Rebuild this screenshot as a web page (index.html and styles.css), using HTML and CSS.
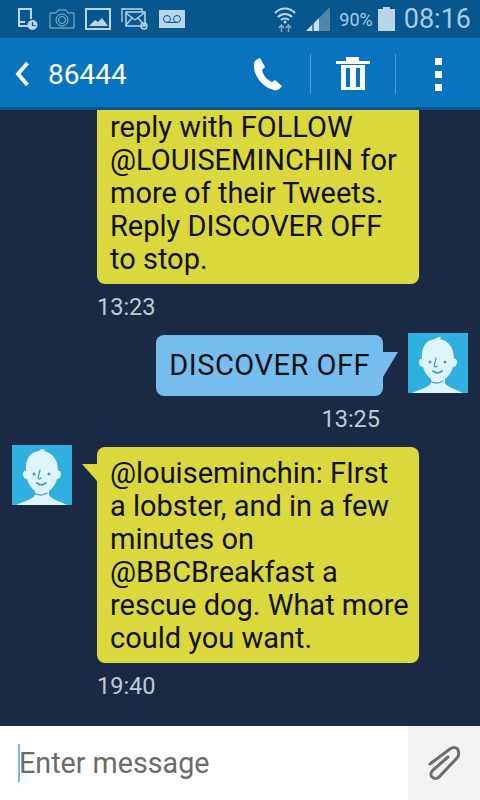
FILE: index.html
```html
<!DOCTYPE html>
<html lang="en">
  <head>
    <meta charset="UTF-8" />
    <meta name="viewport" content="width=device-width, initial-scale=1.0" />
    <title>86444</title>
    <link rel="stylesheet" href="styles.css">
  </head>
  <body>
    <svg class="defs" width="0" height="0">
      <symbol id="face" viewBox="0 0 60 60">
        <rect width="60" height="60" fill="#2fb0de" />
        <path fill="#dff3fb" d="M4 60C12 56 20 55 23 50V46C19 43 16 38 15 34C12 34 11 31 11 29C11 26 13 25 14 26C13 14 18 7 27 6C29 4 31 4 33 4L32 6C41 8 46 15 46 26C48 25 49 27 49 29C49 32 47 34 45 34C44 38 41 43 37 46V50C40 55 48 56 55 60Z" />
        <g fill="none" stroke="#3a9fc8" stroke-width="1.200" stroke-linecap="round">
          <path d="M28 25l-2 8c1 1 2 1 3 0" />
          <path d="M25 38c3 2.500 6 2.500 9 0" stroke-width="1.800" />
          <path d="M22 48c4 2.500 9 2.500 13 0" />
        </g>
        <circle cx="22" cy="29" r="1.500" fill="#3a9fc8" />
        <circle cx="37" cy="29" r="1.500" fill="#3a9fc8" />
      </symbol>
    </svg>

    <div class="statusbar">
      <div class="status-left">
        <svg width="22" height="24" viewBox="0 0 22 24" fill="none" stroke="#b9d6e8" stroke-width="2">
          <path d="M11 19H2V2h12v10M2 15h6" />
          <circle cx="15.500" cy="18" r="5" fill="#b9d6e8" stroke="none" />
          <path d="M15.500 15v3.500h3" stroke="#0a5a92" stroke-width="1.200" />
        </svg>
        <svg width="26" height="20" viewBox="0 0 26 20" fill="none" stroke="#8fb8d4" stroke-width="1">
          <path d="M1 4h6l2-3h8l2 3h6v15H1z" />
          <circle cx="13" cy="11" r="6" />
          <circle cx="13" cy="11" r="3.500" />
        </svg>
        <svg width="26" height="22" viewBox="0 0 26 22">
          <rect x="1" y="1" width="24" height="20" fill="none" stroke="#b9d6e8" stroke-width="2" />
          <path fill="#b9d6e8" d="M4 18l6-6 3 2 4-4 6 8z" />
        </svg>
        <svg width="28" height="23" viewBox="0 0 28 23" fill="none" stroke="#b9d6e8" stroke-width="1.300">
          <path d="M1 14V1h20v4" />
          <rect x="5" y="4" width="19" height="14" fill="#0a5a92" stroke-width="1.500" />
          <path d="M5 5l9 7 9-7M5 17l6-7M23 17l-6-7" />
          <circle cx="23" cy="18" r="3" />
        </svg>
        <svg width="26" height="18" viewBox="0 0 26 18">
          <rect width="26" height="18" fill="#b9d6e8" />
          <g fill="none" stroke="#0a5a92" stroke-width="1">
            <circle cx="8" cy="9" r="3.500" />
            <circle cx="18" cy="9" r="3.500" />
            <path d="M8 12.500h10" />
          </g>
        </svg>
      </div>
      <div class="status-right">
        <svg width="24" height="26" viewBox="0 0 24 26" fill="none" stroke="#b9d6e8" stroke-width="2">
          <path d="M2 7c6-6 14-6 20 0M5 11c4-4 10-4 14 0M8 14c2-2 6-2 8 0" />
          <circle cx="12" cy="16" r="1.500" fill="#b9d6e8" stroke="none" />
          <path d="M8.500 26v-6M15.500 26v-6" stroke="#7fa9c6" stroke-width="1.500" />
          <path d="M6 22l2.500-3 2.500 3M13 22l2.500-3 2.500 3" stroke="#7fa9c6" stroke-width="1.500" />
        </svg>
        <svg class="signal" width="24" height="24" viewBox="0 0 24 24">
          <path fill="#4f87ae" d="M0 24L24 0v24z" />
          <path fill="#c9e0ee" d="M0 24l6-6v6zM8 24v-8l5-5v13z" />
        </svg>
        <span class="battery-text">90%</span>
        <svg class="battery" width="17" height="24" viewBox="0 0 17 24">
          <path fill="#b9d6e8" d="M5 0h7v2h5v22H0V2h5z" />
        </svg>
        <span class="clock">08:16</span>
      </div>
    </div>

    <div class="appbar">
      <svg class="back" width="14" height="26" viewBox="0 0 14 26">
        <path fill="none" stroke="#fff" stroke-width="3.800" d="M12.500 2L3 13l9.500 11" />
      </svg>
      <span class="title">86444</span>
      <div class="actions">
        <div class="action">
          <svg width="30" height="34" viewBox="0 0 30 34">
            <path fill="#fff" d="M1 7C1 4 4 2 7 1l5 9-3 3c1 5 5 10 10 12l3-2 7 6c-2 3-5 5-8 4C11 31 0 20 1 7z" />
          </svg>
        </div>
        <div class="action">
          <svg width="34" height="34" viewBox="0 0 34 34" fill="#fff">
            <path d="M10 0h13v4h11v3H0V4h10z" />
            <path d="M5 8h24v25H5zM10 11v19h4V11zM20 11v19h4V11z" fill-rule="evenodd" />
          </svg>
        </div>
        <div class="action">
          <div class="dots"><i></i><i></i><i></i></div>
        </div>
      </div>
    </div>

    <div class="thread">
      <div class="msg">
        <div class="bubble">reply with FOLLOW<br />@LOUISEMINCHIN for<br />more of their Tweets.<br />Reply DISCOVER OFF<br />to stop.</div>
        <div class="time">13:23</div>
      </div>
      <div class="msg sent">
        <div class="sent-row">
          <div class="bubble blue">DISCOVER OFF</div>
          <svg class="avatar" width="60" height="60"><use href="#face" /></svg>
        </div>
        <div class="time">13:25</div>
      </div>
      <div class="msg received">
        <svg class="avatar" width="60" height="60"><use href="#face" /></svg>
        <div class="bubble tail">@louiseminchin: FIrst<br />a lobster, and in a few<br />minutes on<br />@BBCBreakfast a<br />rescue dog. What more<br />could you want.</div>
      </div>
      <div class="msg last">
        <div class="time">19:40</div>
      </div>
    </div>

    <div class="composer">
      <div class="input"><span class="caret"></span>Enter message</div>
      <div class="attach">
        <svg width="34" height="36" viewBox="0 0 34 36" fill="none" stroke="#6d6d6d" stroke-width="3" stroke-linecap="round">
          <path d="M3 19L23 4c3-2 7-2 8 1s1 6-1 8L12 32c-2 2-5 2-7 0s-1-5 1-7L21 12" />
        </svg>
      </div>
    </div>
  </body>
</html>
```

FILE: styles.css
```css
* {
  box-sizing: border-box;
}
body {
  margin: 0;
  width: 480px;
  height: 800px;
  display: flex;
  flex-direction: column;
  overflow: hidden;
  font-family: Roboto, sans-serif;
  background-color: #1a2a44;
}
.defs {
  position: absolute;
}
.statusbar {
  height: 38px;
  flex: none;
  display: flex;
  justify-content: space-between;
  align-items: center;
  padding: 0 9px 0 17px;
  background-color: #07568e;
  color: #a9cbe2;
}
.status-left,
.status-right {
  display: flex;
  align-items: center;
}
.status-left {
  gap: 10px;
}
.status-right {
  gap: 6px;
}
.signal {
  margin-left: 3px;
}
.battery-text {
  font-size: 18px;
  margin-left: 3px;
}
.battery {
  margin-left: -1px;
}
.clock {
  font-size: 27px;
  margin-left: 3px;
}
.appbar {
  height: 72px;
  flex: none;
  display: flex;
  align-items: center;
  padding: 3px 0 0 15px;
  background-color: #0874c0;
  border-bottom: 3px solid #07568e;
  color: #fff;
}
.title {
  font-size: 28px;
  margin-left: 19px;
  flex: 1;
}
.actions {
  display: flex;
  align-items: center;
}
.action {
  width: 85px;
  height: 40px;
  display: flex;
  align-items: center;
  justify-content: center;
  border-left: 1px solid #4c9bd2;
}
.action:first-child {
  border-left: none;
}
.dots {
  display: flex;
  flex-direction: column;
  gap: 6px;
}
.dots i {
  width: 7px;
  height: 7px;
  background-color: #fff;
}
.thread {
  flex: 1;
  min-height: 0;
  display: flex;
  flex-direction: column;
  justify-content: flex-end;
  overflow: hidden;
  padding-bottom: 27px;
}
.bubble {
  position: relative;
  width: 322px;
  padding: 10px 5px 8px 13px;
  background-color: #dbd83e;
  border-radius: 8px;
  color: #111;
  font-size: 29px;
  line-height: 33px;
}
.msg {
  padding-left: 97px;
}
.time {
  margin-top: 10px;
  color: #c3c9d2;
  font-size: 23.500px;
  line-height: 26px;
}
.sent {
  padding: 0 12px 0 0;
  margin-top: 13px;
}
.sent-row {
  display: flex;
  justify-content: flex-end;
  gap: 25px;
}
.sent .time {
  padding-right: 88px;
  text-align: right;
}
.blue {
  width: auto;
  height: 61px;
  margin-top: 2px;
  padding: 14px 13px;
  letter-spacing: 0.500px;
  background-color: #74bdee;
}
.blue::after {
  content: "";
  position: absolute;
  top: 17px;
  right: -15px;
  border-left: 15px solid #74bdee;
  border-bottom: 25px solid transparent;
  width: 0;
  height: 0;
}
.received {
  display: flex;
  gap: 25px;
  padding-left: 12px;
  margin-top: 13px;
}
.tail {
  margin-top: 2px;
}
.tail::before {
  content: "";
  position: absolute;
  top: 17px;
  left: -15px;
  border-right: 15px solid #dbd83e;
  border-bottom: 17px solid transparent;
  width: 0;
  height: 0;
}
.avatar {
  flex: none;
}
.composer {
  height: 74px;
  flex: none;
  display: flex;
  background-color: #fff;
}
.input {
  flex: 1;
  display: flex;
  align-items: center;
  padding-left: 18px;
  font-size: 28.700px;
  color: #6b6b6b;
}
.caret {
  width: 2px;
  height: 38px;
  margin-right: -1px;
  background-color: #6cbcf0;
}
.attach {
  width: 72px;
  display: flex;
  align-items: center;
  justify-content: center;
  background-color: #f2f2f2;
}
```
